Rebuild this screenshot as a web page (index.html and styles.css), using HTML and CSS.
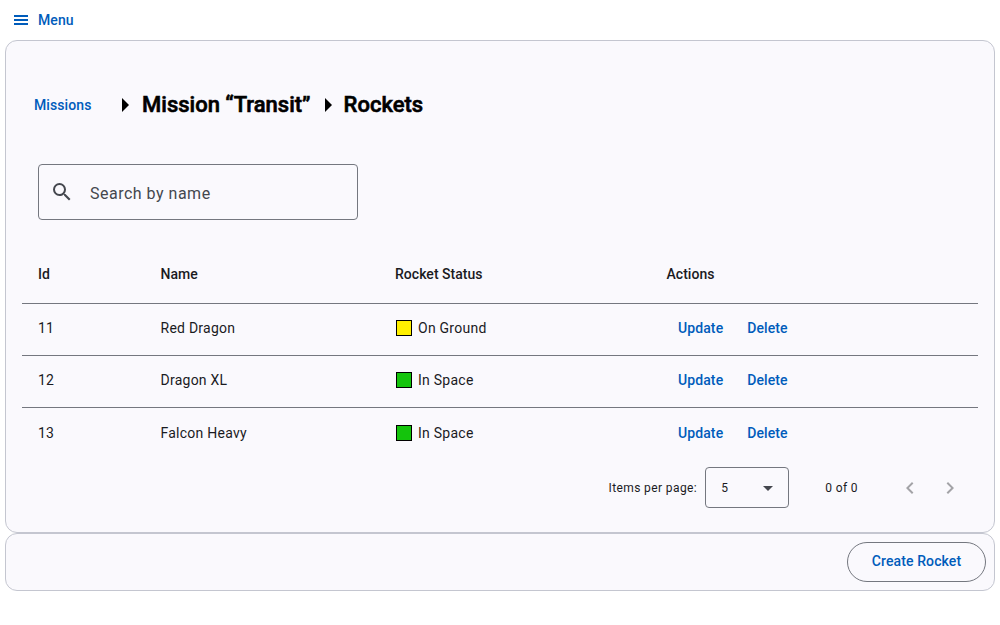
FILE: index.html
```html
<!DOCTYPE html>
<html lang="en">
<head>
<meta charset="utf-8">
<title>Rockets</title>
<link rel="stylesheet" href="styles.css">
</head>
<body>
<header class="toolbar">
  <a class="menu"><svg class="menu-icon" viewBox="0 0 18 18"><path d="M2 4h14v2H2zM2 8h14v2H2zM2 12h14v2H2z"/></svg>Menu</a>
</header>
<main class="card content">
  <nav class="crumbs">
    <a class="link">Missions</a>
    <svg class="chevron first" viewBox="0 0 7 14"><path d="M0 0l7 7-7 7z"/></svg>
    <h1 class="title mission">Mission “Transit”</h1>
    <svg class="chevron" viewBox="0 0 7 14"><path d="M0 0l7 7-7 7z"/></svg>
    <h1 class="title">Rockets</h1>
  </nav>
  <div class="search">
    <svg class="search-icon" viewBox="0 0 24 24"><path d="M15.500 14h-.79l-.28-.27A6.471 6.471 0 0 0 16 9.500 6.500 6.500 0 1 0 9.500 16c1.610 0 3.090-.59 4.230-1.570l.27.28v.79l5 4.990L20.490 19l-4.990-5zm-6 0C7.010 14 5 11.990 5 9.500S7.010 5 9.500 5 14 7.010 14 9.500 11.990 14 9.500 14z"/></svg>
    <span class="placeholder">Search by name</span>
  </div>
  <div class="table">
    <div class="row head"><span>Id</span><span>Name</span><span>Rocket Status</span><span>Actions</span></div>
    <div class="row"><span>11</span><span>Red Dragon</span><span class="status"><i class="swatch ground"></i>On Ground</span><span class="actions"><a class="link">Update</a><a class="link">Delete</a></span></div>
    <div class="row"><span>12</span><span>Dragon XL</span><span class="status"><i class="swatch space"></i>In Space</span><span class="actions"><a class="link">Update</a><a class="link">Delete</a></span></div>
    <div class="row last"><span>13</span><span>Falcon Heavy</span><span class="status"><i class="swatch space"></i>In Space</span><span class="actions"><a class="link">Update</a><a class="link">Delete</a></span></div>
  </div>
  <div class="paginator">
    <span class="per-page">Items per page:</span>
    <div class="select"><span>5</span><svg class="caret" viewBox="0 0 10 5"><path d="M0 0h10L5 5z"/></svg></div>
    <span class="range">0 of 0</span>
    <svg class="page-arrow" viewBox="0 0 24 24"><path d="M15.410 7.410L14 6l-6 6 6 6 1.410-1.410L10.830 12z"/></svg>
    <svg class="page-arrow" viewBox="0 0 24 24"><path d="M10 6L8.590 7.410 13.170 12l-4.580 4.590L10 18l6-6z"/></svg>
  </div>
</main>
<footer class="card footer"><a class="create">Create Rocket</a></footer>
</body>
</html>
```

FILE: styles.css
```css
* { box-sizing: border-box; }
body { margin: 0; background: #fff; color: #1a1b1f; font-family: Roboto, sans-serif; font-size: 14px; letter-spacing: 0.25px; }
.toolbar { height: 40px; display: flex; align-items: center; padding-left: 12px; }
.menu, .link, .create { color: #005cbb; font-weight: 500; letter-spacing: 0.1px; }
.menu { display: flex; align-items: center; gap: 8px; }
.menu-icon { width: 18px; height: 18px; fill: #005cbb; }
.card { margin: 0 5px; background: #faf9fd; border: 1px solid #c4c6d0; border-radius: 12px; }
.content { height: 493px; padding: 0 16px; }
.crumbs { display: flex; align-items: center; height: 46px; margin-top: 41px; padding-left: 12px; }
.chevron { width: 7px; height: 14px; margin: 0 12px 0 14px; fill: #000; }
.chevron.first { margin: 0 13px 0 30.500px; }
.title { margin: 0; padding-bottom: 2px; color: #000; font-size: 22px; font-weight: 500; letter-spacing: 0; -webkit-text-stroke: 0.6px #000; }
.search { display: flex; align-items: center; width: 320px; height: 56px; margin: 36px 0 0 16px; padding-left: 11px; border: 1px solid #74777f; border-radius: 4px; color: #44474e; font-size: 16px; letter-spacing: 0.5px; }
.search-icon { width: 24px; height: 24px; margin-right: 16px; fill: #44474e; }
.placeholder { padding-top: 2px; }
.table { margin-top: 27px; }
.row { display: grid; grid-template-columns: 122.500px 234.500px 271.500px 1fr; align-items: center; height: 52px; padding: 0 16px 3px; border-bottom: 1px solid #74777f; }
.head { height: 57px; padding-bottom: 2px; font-weight: 500; letter-spacing: 0.03px; }
.last { padding-bottom: 2px; border-bottom: 0; }
.status { display: flex; align-items: center; }
.swatch { width: 16px; height: 16px; margin: 0 6px 0 1px; border: 1px solid #000; }
.ground { background: #fff000; }
.space { background: #14c40c; }
.actions { display: flex; gap: 24px; padding-left: 11.500px; }
.paginator { display: flex; align-items: center; justify-content: flex-end; height: 56px; margin-top: -1px; padding: 1px 16px 0 0; font-size: 12px; letter-spacing: 0.4px; }
.select { display: flex; align-items: center; justify-content: space-between; width: 84px; height: 41px; margin: 0 36px 0 8px; padding: 0 15px; border: 1px solid #74777f; border-radius: 4px; }
.caret { width: 10px; height: 5px; margin-top: 2px; fill: #44474e; }
.range { margin-right: 24px; }
.page-arrow { width: 24px; height: 24px; margin-left: 16px; fill: #a3a3a7; }
.footer { display: flex; align-items: center; justify-content: flex-end; height: 58px; padding-right: 8px; }
.create { display: flex; align-items: center; justify-content: center; width: 139px; height: 40px; padding-bottom: 2px; border: 1px solid #74777f; border-radius: 20px; }
```
